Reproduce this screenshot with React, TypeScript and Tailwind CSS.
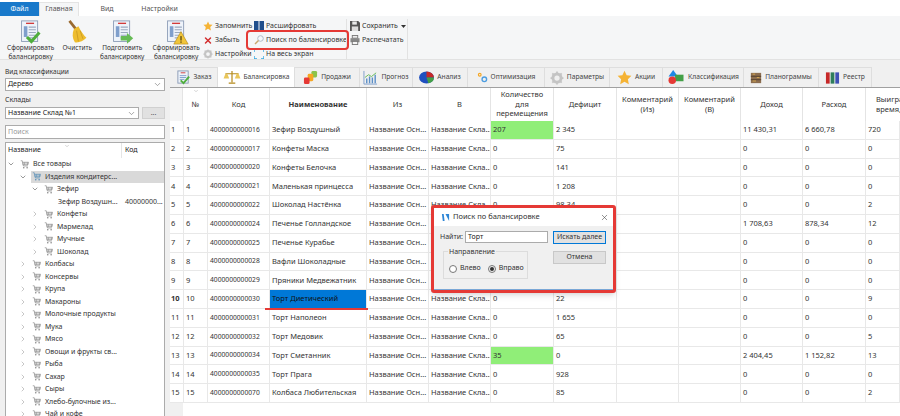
import { ChevronDown, ChevronRight, X } from 'lucide-react';

const rows = [
  ['0000016', 'Зефир Воздушный', '207', '2 345', '11 430,31', '6 660,78', '720'],
  ['0000017', 'Конфеты Маска', '0', '75', '0', '0', '0'],
  ['0000020', 'Конфеты Белочка', '0', '141', '0', '0', '0'],
  ['0000021', 'Маленькая принцесса', '0', '1 208', '0', '0', '0'],
  ['0000022', 'Шоколад Настёнка', '0', '98,34', '0', '0', '2'],
  ['0000024', 'Печенье Голландское', '0', '0', '1 708,63', '878,34', '12'],
  ['0000025', 'Печенье Курабье', '0', '0', '0', '0', '0'],
  ['0000028', 'Вафли Шоколадные', '0', '0', '0', '0', '0'],
  ['0000029', 'Пряники Медвежатник', '0', '0', '0', '0', '0'],
  ['0000030', 'Торт Диетический', '0', '22', '0', '0', '9'],
  ['0000031', 'Торт Наполеон', '0', '1 655', '0', '0', '0'],
  ['0000032', 'Торт Медовик', '0', '65', '0', '0', '5'],
  ['0000034', 'Торт Сметанник', '35', '0', '2 404,45', '1 152,82', '13'],
  ['0000035', 'Торт Прага', '0', '928', '0', '0', '0'],
  ['0000070', 'Колбаса Любительская', '0', '85', '0', '0', '2'],
];

const treeGroups = [
  'Колбасы', 'Консервы', 'Крупа', 'Макароны', 'Молочные продукты', 'Мука', 'Мясо',
  'Овощи и фрукты св...', 'Рыба', 'Сахар', 'Сыры', 'Хлебо-булочные из...', 'Чай и кофе',
];

const gridCols = 'grid grid-cols-[13px_25px_62px_97px_62px_62px_63px_63px_62px_62px_62px_63px_34px]';

function DocIcon({ badge }: { badge: 'check' | 'arrow' | 'warn' }) {
  return (
    <svg width="25" height="25" viewBox="0 0 28 28" className="block">
      <rect x="4" y="1" width="18" height="23" fill="#eef3fa" stroke="#8a9bb5" />
      <rect x="9" y="3" width="9" height="1.5" fill="#d23a3a" />
      <rect x="6.5" y="7" width="4" height="12" fill="#7f9fcc" />
      <path d="M12 8h8M12 11h8M12 14h8M12 17h8M12 20h6" stroke="#9aa9bf" strokeWidth="1.2" />
      {badge === 'check' && <path d="M10 19l5 5 9-10" fill="none" stroke="#4fae3c" strokeWidth="3.4" />}
      {badge === 'arrow' && <path d="M12 18h7v-3.5l7 6-7 6V23h-7z" fill="#66bb55" />}
      {badge === 'warn' && (
        <g>
          <path d="M19 13l8 14H11z" fill="#f0c53a" stroke="#b58a1c" strokeWidth="0.7" />
          <rect x="18.3" y="18" width="1.5" height="5" fill="#5d4a10" />
          <rect x="18.3" y="24" width="1.5" height="1.5" fill="#5d4a10" />
        </g>
      )}
    </svg>
  );
}

function BroomIcon() {
  return (
    <svg width="25" height="25" viewBox="0 0 28 28" className="block">
      <path d="M5 1l7 9" stroke="#9a6a30" strokeWidth="3" />
      <path d="M10 10l5-3c3 6 6 10 9 13-4 4-9 6-13 5-3-5-3-10-1-15z" fill="#eebd2f" />
      <path d="M13 12l2 12M17 12l3 9" stroke="#c4921c" strokeWidth="0.8" />
    </svg>
  );
}

function Star({ size = 12 }: { size?: number }) {
  return (
    <svg width={size} height={size} viewBox="0 0 24 24" className="block shrink-0">
      <path d="M12 1l3.4 7.3 7.6.9-5.6 5.4 1.5 8L12 18.600l-6.900 4 1.500-8L1 9.200l7.600-.9z" fill="#f5b335" />
    </svg>
  );
}

function Gear({ size = 12, color = '#c4c4c4' }: { size?: number; color?: string }) {
  return (
    <svg width={size} height={size} viewBox="0 0 24 24" className="block shrink-0">
      <circle cx="12" cy="12" r="7" fill="none" stroke={color} strokeWidth="5" />
      <path d="M12 1v5M12 18v5M1 12h5M18 12h5M4 4l3.500 3.500M16.500 16.500L20 20M20 4l-3.500 3.500M7.500 16.500L4 20" stroke={color} strokeWidth="3" />
    </svg>
  );
}

function Cart({ color = '#8a8a8a' }: { color?: string }) {
  return (
    <svg width="9" height="9" viewBox="0 0 12 12" className="block shrink-0">
      <path d="M1 1h2l1.500 7h6M3.500 3h8l-1 3.500H4.200M4 3v3.500M6 3v3.500M8 3v3.500M10 3v3.500" fill="none" stroke={color} strokeWidth="0.9" />
      <circle cx="5" cy="10.300" r="1.100" fill={color} />
      <circle cx="9.500" cy="10.300" r="1.100" fill={color} />
    </svg>
  );
}

function BigAction({ icon, lines }: { icon: React.ReactNode; lines: string[] }) {
  return (
    <div className="flex flex-col items-center leading-[9px] text-[6.500px] text-[#333] whitespace-nowrap">
      <div className="h-[23px]">{icon}</div>
      {lines.map((l) => (
        <span key={l}>{l}</span>
      ))}
    </div>
  );
}

function SmallAction({ icon, label }: { icon: React.ReactNode; label: string }) {
  return (
    <div className="flex items-center gap-[2px] h-[14px] text-[7px] text-[#333] whitespace-nowrap">
      <span className="w-[10px] flex justify-center">{icon}</span>
      {label}
    </div>
  );
}

function TabIcon({ kind }: { kind: string }) {
  switch (kind) {
    case 'order':
      return (
        <svg width="15" height="15" viewBox="0 0 16 16"><rect x="2" y="1" width="11" height="13" fill="#eef3fa" stroke="#8a9bb5" /><rect x="5" y="2.500" width="5" height="1" fill="#d23a3a" /><path d="M4 6h7M4 8h7M4 10h5" stroke="#7f9fcc" /><path d="M5 11l3 3 6-7" fill="none" stroke="#4fae3c" strokeWidth="2" /></svg>
      );
    case 'scales':
      return (
        <svg width="18" height="15" viewBox="0 0 18 16"><path d="M9 1v12M2 4h14M5.500 14h7" stroke="#b58a1c" strokeWidth="1.300" /><path d="M0 9h6L4 4h-2zM12 9h6l-2-5h-2z" fill="#e9c65a" /></svg>
      );
    case 'sales':
      return (
        <svg width="15" height="15" viewBox="0 0 16 16"><rect x="9" y="1" width="6" height="7" rx="1.500" fill="#8bc34a" /><rect x="5" y="4" width="6" height="8" rx="1.500" fill="#f5a623" /><rect x="1" y="8" width="6" height="7" rx="1.500" fill="#e53935" /></svg>
      );
    case 'forecast':
      return (
        <svg width="15" height="15" viewBox="0 0 16 16"><path d="M1 1v14h14" fill="none" stroke="#7f9fcc" /><path d="M4 14V9M7 14V7M10 14V8M13 14V5" stroke="#5b8fc7" strokeWidth="1.500" /><path d="M2 8l4-3 3 2 5-4" fill="none" stroke="#66bb55" /></svg>
      );
    case 'analysis':
      return (
        <svg width="15" height="13" viewBox="0 0 16 14"><ellipse cx="8" cy="7" rx="8" ry="6.500" fill="#1f4fbf" /><path d="M8 7V.5A8 6.500 0 0 1 16 7z" fill="#c62828" /><path d="M8 7h8a8 6.500 0 0 1-6 6.300z" fill="#43a047" /></svg>
      );
    case 'optim':
      return (
        <svg width="11" height="11" viewBox="0 0 12 12"><circle cx="8" cy="8" r="2.500" fill="none" stroke="#4d9de0" strokeWidth="1.500" /><circle cx="3" cy="3" r="1.500" fill="none" stroke="#f5a623" strokeWidth="1.200" /></svg>
      );
    case 'classes':
      return (
        <svg width="18" height="15" viewBox="0 0 18 16"><path d="M6 0l5 7H1z" fill="#1e88e5" /><rect x="8" y="5" width="9" height="7" fill="#43a047" /><circle cx="5" cy="11" r="4" fill="#e53935" /></svg>
      );
    case 'plano':
      return (
        <svg width="12" height="12" viewBox="0 0 14 14"><rect x="1" y="1" width="12" height="12" fill="#8d6e4f" /><path d="M1 5h12M1 9h12" stroke="#4e3a28" /><path d="M3 2.500h3M8 6.500h3M3 10.500h4" stroke="#e0b050" /></svg>
      );
    default:
      return (
        <svg width="15" height="14" viewBox="0 0 16 14"><rect x="1" y="1" width="4" height="12" fill="#c62828" /><rect x="6" y="1" width="4" height="12" fill="#2e7d5b" /><rect x="11" y="1" width="4" height="12" fill="#3f51b5" /></svg>
      );
  }
}

const docTabs: [string, string, string][] = [
  ['order', 'Заказ', 'w-[48px]'],
  ['scales', 'Балансировка', 'w-[77px]'],
  ['sales', 'Продажи', 'w-[65px]'],
  ['forecast', 'Прогноз', 'w-[53px]'],
  ['analysis', 'Анализ', 'w-[55px]'],
  ['optim', 'Оптимизация', 'w-[77px]'],
  ['gear', 'Параметры', 'w-[65px]'],
  ['star', 'Акции', 'w-[53px]'],
  ['classes', 'Классификация', 'w-[81px]'],
  ['plano', 'Планограммы', 'w-[75px]'],
  ['reg', 'Реестр', 'w-[53px]'],
];

function TreeRow({ indent, label, open, selected }: { indent: string; label: string; open?: boolean; selected?: boolean }) {
  return (
    <div className={`flex items-center h-[12.500px] whitespace-nowrap ${indent}`}>
      <span className="w-[12px] shrink-0">
        {open ? <ChevronDown size={8} strokeWidth={2} className="text-[#666]" /> : <ChevronRight size={8} strokeWidth={2} className="text-[#aaa]" />}
      </span>
      <span className={`flex items-center gap-[4px] h-full flex-1 pl-[1px] ${selected ? 'bg-[#d9d9d9]' : ''}`}>
        <Cart color={selected ? '#5a8fb8' : '#8a8a8a'} />
        {label}
      </span>
    </div>
  );
}

function Sidebar() {
  return (
    <aside className="w-[170px] shrink-0 flex flex-col pl-[5px] pr-[5px] pt-[7px] text-[7px] text-[#333]">
      <div className="leading-[10px] h-[11px] text-[6.600px]">Вид классификации</div>
      <div className="h-[13px] border border-[#ababab] bg-white flex items-center justify-between px-[2px] text-[#222]">
        Дерево
        <ChevronDown size={9} className="text-[#888]" />
      </div>
      <div className="leading-[10px] mt-[4px] h-[11px]">Склады</div>
      <div className="flex gap-[3px] mt-[1px]">
        <div className="flex-1 h-[12px] border border-[#ababab] bg-white flex items-center justify-between px-[2px] text-[#222]">
          Название Склад №1
          <ChevronDown size={9} className="text-[#888]" />
        </div>
        <div className="w-[23px] h-[12px] bg-[#e1e1e1] border border-[#d0d0d0] flex items-center justify-center text-[#555]">...</div>
      </div>
      <div className="h-[14px] mt-[6px] border border-[#ababab] bg-white flex items-center px-[2px] text-[#999]">Поиск</div>
      <div className="flex-1 mt-[3px] border border-[#ababab] border-b-0 bg-white overflow-hidden">
        <div className="flex h-[15px] items-center relative text-[#222]">
          <span className="w-[116px] pl-[2px] border-r border-[#e5e5e5] h-full flex items-center">Название</span>
          <span className="pl-[3px]">Код</span>
          <ChevronDown size={6} className="absolute left-[58px] top-0 text-[#aaa]" />
        </div>
        <TreeRow indent="pl-[1px]" label="Все товары" open />
        <TreeRow indent="pl-[13px]" label="Изделия кондитерс..." open selected />
        <TreeRow indent="pl-[25px]" label="Зефир" open />
        <div className="flex items-center h-[12.500px] whitespace-nowrap pl-[52px]">
          <span className="w-[65px] shrink-0">Зефир Воздушн...</span>
          <span className="ml-[2px]">40000000...</span>
        </div>
        {['Конфеты', 'Мармелад', 'Мучные', 'Шоколад'].map((l) => (
          <TreeRow key={l} indent="pl-[25px]" label={l} />
        ))}
        {treeGroups.map((l) => (
          <TreeRow key={l} indent="pl-[13px]" label={l} />
        ))}
      </div>
    </aside>
  );
}

function HeaderCell({ children, bold, className }: { children?: React.ReactNode; bold?: boolean; className?: string }) {
  return (
    <div className={`flex items-center justify-center text-center leading-[9.500px] border-r border-[#e4e4e4] ${bold ? 'font-bold' : ''} ${className ?? ''}`}>
      {children}
    </div>
  );
}

function Cell({ children, className }: { children?: React.ReactNode; className?: string }) {
  return (
    <div className={`flex items-center pl-[2px] overflow-hidden whitespace-nowrap border-r-[1.500px] border-[#e8e8e8] ${className ?? ''}`}>
      {children}
    </div>
  );
}

function Grid() {
  return (
    <div className="flex-1 overflow-hidden bg-white border-t-[1.500px] border-[#a0a0a0] text-[7.500px] text-[#333] relative">
      <ChevronDown size={6} className="absolute left-[23px] top-0 text-[#aaa]" />
      <div className={`${gridCols} h-[33px]`}>
        <HeaderCell className="bg-[#f5f5f5]" />
        <HeaderCell>№</HeaderCell>
        <HeaderCell>Код</HeaderCell>
        <HeaderCell bold>Наименование</HeaderCell>
        <HeaderCell>Из</HeaderCell>
        <HeaderCell>В</HeaderCell>
        <HeaderCell>Количество<br />для<br />перемещения</HeaderCell>
        <HeaderCell>Дефицит</HeaderCell>
        <HeaderCell className="items-start pt-[7px]">Комментарий<br />(Из)</HeaderCell>
        <HeaderCell className="items-start pt-[7px]">Комментарий<br />(В)</HeaderCell>
        <HeaderCell>Доход</HeaderCell>
        <HeaderCell>Расход</HeaderCell>
        <HeaderCell className="justify-start pl-[10px] text-left whitespace-nowrap border-r-0 overflow-hidden">Выигра<br />время,</HeaderCell>
      </div>
      {rows.map((r, i) => {
        const selected = i === 9;
        const green = r[2] !== '0';
        return (
          <div key={r[0]} className={`${gridCols} h-[18.800px] border-b-[1.500px] border-[#e8e8e8]`}>
            <div className={`flex items-center pl-[1px] bg-white ${selected ? 'font-bold' : ''}`}>{i + 1}</div>
            <Cell className="border-l-[1.500px]">{i + 1}</Cell>
            <Cell className="text-[6.700px]">400000000{r[0].slice(3)}</Cell>
            <Cell className={selected ? 'bg-[#0078d7] text-[#111]' : ''}>{r[1]}</Cell>
            <Cell>Название Осн...</Cell>
            <Cell>Название Скла...</Cell>
            <Cell className={green ? 'bg-[#90ee78]' : ''}>{r[2]}</Cell>
            <Cell>{r[3]}</Cell>
            <Cell />
            <Cell />
            <Cell>{r[4]}</Cell>
            <Cell>{r[5]}</Cell>
            <Cell className="border-r-0">{r[6]}</Cell>
          </div>
        );
      })}
      <div className="w-[13px] h-full bg-[#f0f0f0]" />
    </div>
  );
}

function SearchDialog() {
  return (
    <div className="absolute left-[431px] top-[205px] w-[185px] h-[88px] border-[3px] border-[#e53935] rounded-[3px] bg-[#f0f0f0] text-[7px] text-[#333] flex flex-col shadow-md">
      <div className="h-[18px] bg-white flex items-center justify-between pl-[7px] pr-[4px] shrink-0">
        <span className="flex items-center gap-[3px] text-[7.500px]">
          <svg width="9" height="9" viewBox="0 0 10 10"><path d="M1 1h2l1 8H2zM5 1l4 8V1z" fill="#2e86d6" /></svg>
          Поиск по балансировке
        </span>
        <X size={9} strokeWidth={1.500} className="text-[#444]" />
      </div>
      <div className="flex-1 flex gap-[5px] pl-[6px] pr-[6px] pt-[5px] border-b-[1.500px] border-[#7aa7d6]">
        <div className="flex flex-col">
          <div className="flex items-center gap-[3px] h-[12px]">
            <span className="w-[22px]">Найти:</span>
            <div className="w-[83px] h-[12px] bg-white border border-[#ababab] flex items-center pl-[2px] text-[#222]">Торт</div>
          </div>
          <div className="relative mt-[8px] w-[85px] h-[28px] ml-[3px] border border-[#dcdcdc] flex items-center gap-[7px] pl-[5px] pt-[7px]">
            <span className="absolute -top-[5px] left-[4px] bg-[#f0f0f0] px-[1px] leading-[9px]">Направление</span>
            <span className="flex items-center gap-[3px]">
              <span className="w-[8px] h-[8px] rounded-full bg-white border border-[#777]" />
              Влево
            </span>
            <span className="flex items-center gap-[3px]">
              <span className="w-[8px] h-[8px] rounded-full border border-[#777] flex items-center justify-center">
                <span className="w-[4px] h-[4px] rounded-full bg-[#333]" />
              </span>
              Вправо
            </span>
          </div>
        </div>
        <div className="flex flex-col gap-[7px]">
          <div className="w-[53px] h-[12.500px] bg-[#e1e1e1] border border-[#0078d7] flex items-center justify-center whitespace-nowrap">Искать далее</div>
          <div className="w-[53px] h-[13px] bg-[#e1e1e1] border border-[#c8c8c8] flex items-center justify-center">Отмена</div>
        </div>
      </div>
    </div>
  );
}

export default function App() {
  return (
    <div className="relative w-[900px] h-[416px] overflow-hidden bg-[#f0f0f0] flex flex-col font-['Noto_Sans',sans-serif]">
      {/* Ribbon tabs */}
      <div className="h-[16px] bg-white flex items-end text-[7px] text-[#555] shrink-0">
        <div className="w-[39px] h-[14px] bg-[#1979ca] text-white flex items-center justify-center">Файл</div>
        <div className="w-[40px] h-[14px] bg-[#f5f6f7] border-t border-x border-[#e4e4e4] flex items-center justify-center">Главная</div>
        <div className="w-[56px] h-[14px] flex items-center justify-center">Вид</div>
        <div className="w-[49px] h-[14px] flex items-center justify-center">Настройки</div>
      </div>

      {/* Ribbon */}
      <div className="h-[44px] bg-[#f5f6f7] border-b border-[#e2e2e2] flex items-start pt-[4px] shrink-0">
        <div className="flex gap-[8px] pl-[7px] w-[200px] shrink-0">
          <BigAction icon={<DocIcon badge="check" />} lines={['Сформировать', 'балансировку']} />
          <BigAction icon={<BroomIcon />} lines={['Очистить']} />
          <BigAction icon={<DocIcon badge="arrow" />} lines={['Подготовить', 'балансировку']} />
          <BigAction icon={<DocIcon badge="warn" />} lines={['Сформировать', 'балансировку']} />
        </div>
        <div className="flex flex-col w-[51px] shrink-0 pl-[3px] -mt-[1px]">
          <SmallAction icon={<Star size={10} />} label="Запомнить" />
          <SmallAction icon={<X size={11} strokeWidth={3.500} className="text-[#d32f2f]" />} label="Забыть" />
          <SmallAction icon={<Gear size={10} />} label="Настройки" />
        </div>
        <div className="flex flex-col w-[95px] shrink-0 pl-[3px] -mt-[1px]">
          <SmallAction
            icon={<svg width="10" height="10" viewBox="0 0 10 10"><path d="M0 0h4.500v10H0zM5.500 0H10v10H5.500z" fill="#1f4e8c" /></svg>}
            label="Расшифровать"
          />
          <SmallAction
            icon={<svg width="10" height="10" viewBox="0 0 10 10"><circle cx="6.500" cy="3.500" r="2.800" fill="#f5f8fb" stroke="#b0bcc8" /><path d="M4.500 5.500L1 9" stroke="#c9a66b" strokeWidth="1.400" /></svg>}
            label="Поиск по балансировке"
          />
          <SmallAction
            icon={<svg width="10" height="10" viewBox="0 0 10 10"><path d="M0 3V0h3M7 0h3v3M10 7v3H7M3 10H0V7" fill="none" stroke="#35a8e0" strokeWidth="1.400" /></svg>}
            label="На весь экран"
          />
        </div>
        <div className="flex flex-col w-[62px] shrink-0 pl-[3px] -mt-[1px] h-[40px] border-x border-[#e2e2e2]">
          <div className="flex items-center gap-[3px]">
            <SmallAction
              icon={<svg width="10" height="10" viewBox="0 0 11 11"><path d="M0 0h9l2 2v9H0z" fill="#555" /><rect x="2.500" y="0.500" width="5" height="3.500" fill="#e8e8e8" /><rect x="2" y="6" width="7" height="5" fill="#ddd" /></svg>}
              label="Сохранить"
            />
            <svg width="5" height="3" viewBox="0 0 5 3"><path d="M0 0h5L2.500 3z" fill="#333" /></svg>
          </div>
          <SmallAction
            icon={<svg width="10" height="10" viewBox="0 0 11 11"><rect x="2.500" y="0.500" width="6" height="3" fill="#eee" stroke="#777" /><rect x="0.500" y="3.500" width="10" height="4.500" fill="#888" /><rect x="2.500" y="7" width="6" height="3.500" fill="#f5f5f5" stroke="#777" /></svg>}
            label="Распечатать"
          />
        </div>
      </div>

      {/* Body */}
      <div className="flex-1 flex min-h-0">
        <Sidebar />
        <main className="flex-1 flex flex-col min-w-0 pt-[7px]">
          <div className="h-[20px] flex items-stretch text-[6.700px] text-[#444] shrink-0">
            {docTabs.map(([kind, label, w]) => (
              <div
                key={kind}
                className={`${w} shrink-0 flex items-center justify-center gap-[3px] border-r border-[#dedede] whitespace-nowrap ${kind === 'scales' ? 'bg-white' : 'bg-[#f0f0f0] border-t'}`}
              >
                {kind === 'gear' ? <Gear size={14} /> : kind === 'star' ? <Star size={15} /> : <TabIcon kind={kind} />}
                {label}
              </div>
            ))}
          </div>
          <Grid />
        </main>
      </div>

      {/* Callouts drawn over the screenshot */}
      <div className="absolute left-[246px] top-[30px] w-[103px] h-[20px] border-[2.500px] border-[#e53935] rounded-[4px]" />
      <div className="absolute left-[265px] top-[308px] w-[103px] h-[2px] bg-[#e53935]" />
      <SearchDialog />
    </div>
  );
}
